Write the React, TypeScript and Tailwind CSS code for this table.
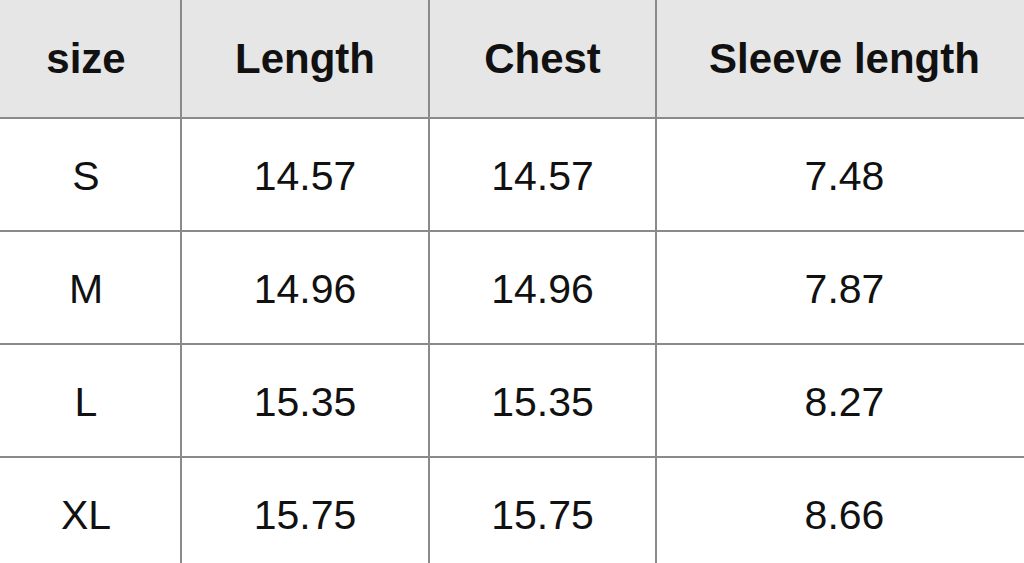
const headers = ["size", "Length", "Chest", "Sleeve length"]

const rows = [
  ["S", "14.57", "14.57", "7.48"],
  ["M", "14.96", "14.96", "7.87"],
  ["L", "15.35", "15.35", "8.27"],
  ["XL", "15.75", "15.75", "8.66"],
]

// first / last column sit a little cropped in the shot, so nudge their text
const colPad = ["pr-[8px]", "", "", "pl-[8px]"]

export default function App() {
  return (
    <div className="h-[563px] w-[1024px] overflow-hidden bg-white font-['Liberation_Sans',Arial,sans-serif] text-[#111]">
      <div className="grid grid-cols-[180px_246px_225px_1fr] grid-rows-[117px_111px_111px_111px_111px] gap-[2px] bg-[#8a8a8a]">
        {headers.map((h, i) => (
          <div key={h} className={`flex items-center justify-center bg-[#e6e6e6] text-[42px] font-bold ${colPad[i]}`}>
            {h}
          </div>
        ))}
        {rows.map((r) =>
          r.map((c, i) => (
            <div key={r[0] + i} className={`flex items-center justify-center bg-white pt-[5px] text-[41px] ${colPad[i]}`}>
              {c}
            </div>
          ))
        )}
      </div>
    </div>
  )
}
